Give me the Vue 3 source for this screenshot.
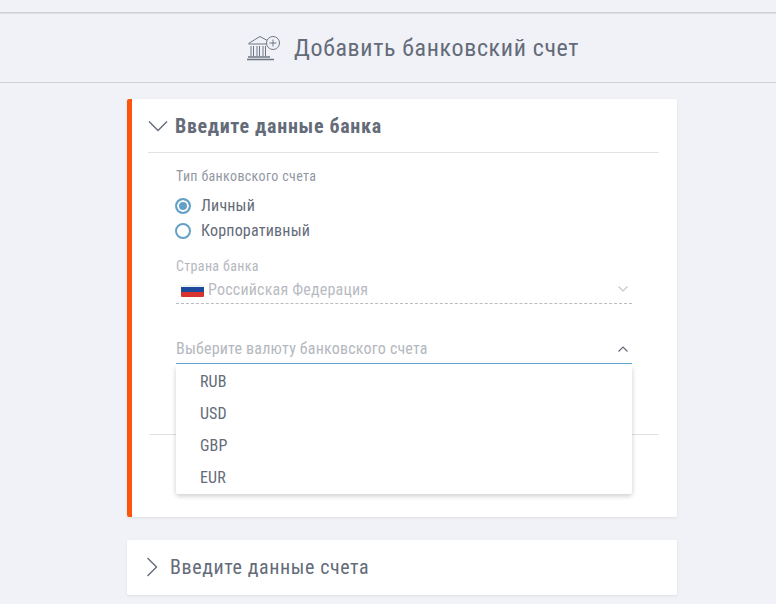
<script setup>
const currencies = ['RUB', 'USD', 'GBP', 'EUR']
</script>

<template>
  <div class="page">
    <header class="head">
      <svg class="bank" width="34" height="28" viewBox="0 0 34 28" fill="none" stroke="#6f7683" stroke-width="1">
        <path d="M1.5 9.5 L13 2.5 L24 8.5 M1.5 10 H22" />
        <path d="M4 12 V22 M6.5 12 V22 M10 12 V22 M12.5 12 V22 M16 12 V22 M18.5 12 V22" />
        <path d="M1 23 H23 M0 25.5 H27" stroke-width="1.3" />
        <circle cx="26" cy="9" r="6.5" fill="#f0f2f7" />
        <path d="M26 5.5 V12.5 M22.5 9 H29.5" />
      </svg>
      <h1>Добавить банковский счет</h1>
    </header>

    <main class="content">
      <section class="card active">
        <div class="card-title">
          <svg width="20" height="12" viewBox="0 0 20 12" fill="none" stroke="#646b79" stroke-width="1.4"><path d="M1 1.5 L10 10.5 L19 1.5" /></svg>
          <h2>Введите данные банка</h2>
        </div>

        <div class="form">
          <div class="label">Тип банковского счета</div>
          <label class="radio"><span class="dot on"></span>Личный</label>
          <label class="radio second"><span class="dot"></span>Корпоративный</label>

          <div class="label country">Страна банка</div>
          <div class="select disabled">
            <span class="flag"></span>
            <span class="value">Российская Федерация</span>
            <svg width="10" height="6" viewBox="0 0 10 6" fill="none" stroke="#c4c7cc" stroke-width="1.2"><path d="M0.5 0.5 L5 5 L9.5 0.5" /></svg>
          </div>

          <div class="select open">
            <span class="value">Выберите валюту банковского счета</span>
            <svg width="10" height="6" viewBox="0 0 10 6" fill="none" stroke="#646b79" stroke-width="1.2"><path d="M0.5 5.5 L5 1 L9.5 5.5" /></svg>
            <ul class="menu">
              <li v-for="c in currencies" :key="c">{{ c }}</li>
            </ul>
          </div>
        </div>

        <div class="divider"></div>
      </section>

      <section class="card closed">
        <svg width="12" height="20" viewBox="0 0 12 20" fill="none" stroke="#646b79" stroke-width="1.4"><path d="M1.5 1 L10.5 10 L1.5 19" /></svg>
        <h2>Введите данные счета</h2>
      </section>
    </main>
  </div>
</template>

<style>
html, body { margin: 0; background: #f0f2f7; }
</style>

<style scoped>
.page {
  width: 776px;
  height: 604px;
  overflow: hidden;
  background: #f0f2f7;
  font-family: Roboto, sans-serif;
  font-stretch: 75%;
  color: #646b79;
  padding-top: 12px;
  box-sizing: border-box;
}
.head {
  height: 71px;
  box-sizing: border-box;
  border-top: 1px solid #cfd1d6;
  border-bottom: 1px solid #cfd1d6;
  display: flex;
  align-items: center;
  gap: 13px;
  padding-left: 247px;
  box-shadow: inset 0 1px 0 #dcdee2;
}
.bank { margin-top: 1px; }
h1 {
  margin: 0;
  font-size: 24px;
  font-weight: 400;
  letter-spacing: 0.64px;
}
.content {
  width: 550px;
  margin: 16px 0 0 127px;
  display: flex;
  flex-direction: column;
  gap: 23px;
}
.card {
  background: #fff;
  box-shadow: 0 1px 3px rgba(0, 0, 0, 0.08);
  border-radius: 2px;
}
.active {
  height: 418px;
  box-sizing: border-box;
  border-left: 5px solid #fc5510;
  padding: 0 18px 0 16px;
  position: relative;
}
.card-title {
  height: 53px;
  border-bottom: 1px solid #e0e2e5;
  display: flex;
  align-items: center;
  gap: 7px;
}
h2 {
  margin: 0;
  font-size: 20px;
  font-weight: 700;
  letter-spacing: 0.7px;
}
.form {
  padding: 15px 27px 0 28px;
}
.label {
  font-size: 14px;
  line-height: 16px;
  color: #9298a3;
  letter-spacing: 0.35px;
}
.radio {
  display: flex;
  align-items: center;
  gap: 10px;
  font-size: 16px;
  line-height: 25px;
  height: 25px;
  margin: 9px 0 0 -1px;
  letter-spacing: 0.2px;
}
.radio.second { margin-top: 0; }
.dot {
  width: 16px;
  height: 16px;
  box-sizing: border-box;
  border: 2px solid #64a0c8;
  border-radius: 50%;
  background: #fff;
}
.dot.on {
  background: #64a0c8;
  box-shadow: inset 0 0 0 2px #fff;
}
.label.country {
  margin-top: 15px;
  color: #b4b8be;
}
.select {
  display: flex;
  align-items: center;
  font-size: 16px;
  position: relative;
}
.value { flex: 1; letter-spacing: 0.2px; }
.select svg { margin-right: 4px; }
.disabled {
  height: 29px;
  color: #b8bcc2;
  border-bottom: 1px dashed #b9bcc1;
  margin-top: 1px;
  box-sizing: border-box;
}
.flag {
  width: 23px;
  height: 12px;
  margin: 3px 4px 0 5px;
  background: linear-gradient(#eef0f4 0 14%, #1d4a9c 14% 58%, #d8332c 58%);
  border-radius: 1px;
}
.open {
  height: 31px;
  margin-top: 29px;
  color: #b4b8be;
}
.open::after {
  content: "";
  position: absolute;
  left: 0;
  right: 0;
  bottom: 0;
  height: 1px;
  background: #5fa3cf;
}
.menu {
  position: absolute;
  left: 0;
  right: 0;
  top: 33px;
  margin: 0;
  padding: 0;
  list-style: none;
  background: #fff;
  box-shadow: 0 2px 5px rgba(0, 0, 0, 0.2);
  clip-path: inset(0 -10px -10px -10px);
  border-radius: 0 0 2px 2px;
  z-index: 2;
}
.menu li {
  height: 32px;
  line-height: 32px;
  padding-left: 24px;
  font-size: 16px;
  letter-spacing: 0.1px;
  color: #646b79;
}
.divider {
  position: absolute;
  left: 17px;
  right: 18px;
  top: 335px;
  border-top: 1px solid #e0e2e5;
}
.closed {
  height: 55px;
  display: flex;
  align-items: center;
  gap: 12px;
  padding: 0 0 1px 19px;
  box-sizing: border-box;
}
.closed h2 {
  font-weight: 400;
  letter-spacing: 0.6px;
}
</style>
